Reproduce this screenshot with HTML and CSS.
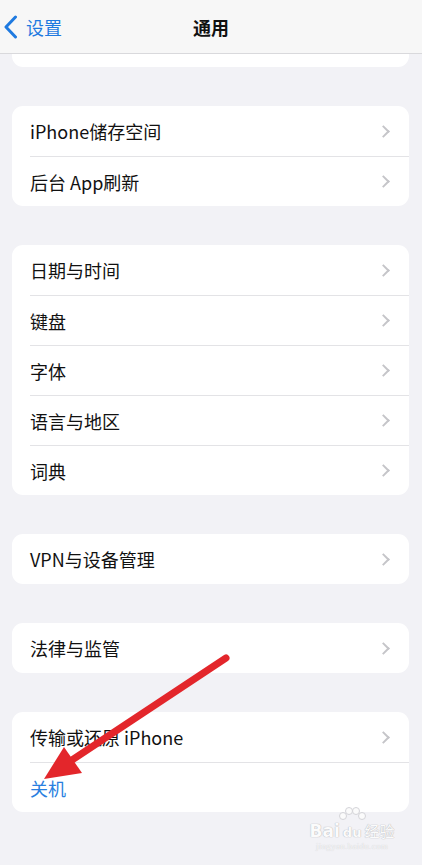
FILE: index.html
```html
<!DOCTYPE html>
<html lang="zh-CN">
<head>
    <meta charset="UTF-8">
    <meta name="viewport" content="width=device-width, initial-scale=1.0">
    <title>通用</title>
    <link rel="stylesheet" href="styles.css">
</head>
<body>
    <div class="navbar">
        <div class="back">
            <svg class="back-icon" width="15" height="24" viewBox="0 0 15 24">
                <path d="M12.5 2 L3 12 L12.5 22" fill="none" stroke="#1f7ae0" stroke-width="3" stroke-linecap="round" stroke-linejoin="round"/>
            </svg>
            <span>设置</span>
        </div>
        <div class="title">通用</div>
        <div></div>
    </div>

    <div class="content">
        <div class="card card-cut"></div>

        <div class="card">
            <div class="row"><span class="label">iPhone储存空间</span><span class="chev"></span></div>
            <div class="row"><span class="label">后台 App刷新</span><span class="chev"></span></div>
        </div>

        <div class="card">
            <div class="row"><span class="label">日期与时间</span><span class="chev"></span></div>
            <div class="row"><span class="label">键盘</span><span class="chev"></span></div>
            <div class="row"><span class="label">字体</span><span class="chev"></span></div>
            <div class="row"><span class="label">语言与地区</span><span class="chev"></span></div>
            <div class="row"><span class="label">词典</span><span class="chev"></span></div>
        </div>

        <div class="card">
            <div class="row"><span class="label">VPN与设备管理</span><span class="chev"></span></div>
        </div>

        <div class="card">
            <div class="row"><span class="label">法律与监管</span><span class="chev"></span></div>
        </div>

        <div class="card">
            <div class="row"><span class="label">传输或还原 iPhone</span><span class="chev"></span></div>
            <div class="row"><span class="label link">关机</span></div>
        </div>
    </div>

    <!-- 标注箭头 -->
    <svg class="arrow" width="422" height="865" viewBox="0 0 422 865">
        <line x1="226" y1="658" x2="72" y2="760" stroke="#e3262b" stroke-width="7" stroke-linecap="round"/>
        <polygon points="44,779 64,747 82,773" fill="#e3262b"/>
    </svg>

    <div class="watermark">
        <svg class="paw" width="34" height="22" viewBox="0 0 34 22">
            <circle cx="9" cy="10" r="3.5" fill="#fbfbfb" stroke="#d4d4d8"/>
            <circle cx="15" cy="5" r="3.5" fill="#fbfbfb" stroke="#d4d4d8"/>
            <circle cx="22" cy="5" r="3.5" fill="#fbfbfb" stroke="#d4d4d8"/>
            <circle cx="28" cy="10" r="3.5" fill="#fbfbfb" stroke="#d4d4d8"/>
        </svg>
        <div class="wm-main"><span>Bai</span><span class="wm-du">du</span><span>经验</span></div>
        <div class="wm-url">jingyan.baidu.com</div>
    </div>
</body>
</html>
```

FILE: styles.css
```css
body {
    margin: 0;
    padding: 0;
    background-color: #f2f2f6;
    font-family: "Noto Sans CJK SC", "Noto Sans", sans-serif;
    color: #111;
    width: 422px;
    height: 865px;
    overflow: hidden;
    position: relative;
}
.navbar {
    height: 54px;
    background: #f7f7f7;
    border-bottom: 1px solid #d9d9dc;
    box-sizing: border-box;
    display: grid;
    grid-template-columns: 1fr auto 1fr;
    align-items: center;
}
.back {
    display: flex;
    align-items: center;
    gap: 8px;
    padding-left: 3px;
    color: #1f7ae0;
    font-size: 18px;
}
.back-icon {
    display: block;
}
.title {
    font-size: 18px;
    font-weight: 600;
}
.content {
    padding: 0 13px 0 12px;
    display: flex;
    flex-direction: column;
    gap: 39px;
}
.card {
    background: #fff;
    border-radius: 11px;
    overflow: hidden;
}
.card-cut {
    height: 13px;
    border-radius: 0 0 11px 11px;
}
.row {
    height: 50px;
    margin-left: 18px;
    padding-right: 18px;
    display: flex;
    align-items: center;
    justify-content: space-between;
    font-size: 18px;
    border-top: 1px solid #e3e3e6;
    box-sizing: border-box;
}
.row:first-child {
    border-top: none;
}
.link {
    color: #2a7fe0;
}
.chev {
    width: 7px;
    height: 7px;
    border-right: 2px solid #c5c5c9;
    border-top: 2px solid #c5c5c9;
    transform: rotate(45deg);
    margin-right: 3px;
}
.arrow {
    position: absolute;
    left: 0;
    top: 0;
}
.watermark {
    position: absolute;
    left: 304px;
    top: 814px;
    width: 96px;
    display: flex;
    flex-direction: column;
    align-items: center;
}
.paw {
    position: absolute;
    left: 30px;
    top: -8px;
}
.wm-main {
    display: flex;
    align-items: baseline;
    gap: 3px;
    font-family: "DejaVu Sans", sans-serif;
    font-size: 17px;
    font-weight: bold;
    color: #fbfbfb;
    text-shadow: 0 0 1px #b8b8bc, 0 0 1px #b8b8bc;
    margin-top: 6px;
}
.wm-du {
    font-size: 13px;
}
.wm-main span:last-child {
    font-family: "Noto Sans CJK SC", sans-serif;
    font-size: 15px;
    font-weight: normal;
}
.wm-url {
    font-family: "Liberation Serif", serif;
    font-size: 9px;
    color: #f6f6f6;
    text-shadow: 0 0 1px #c4c4c8;
    letter-spacing: 0.3px;
}
```
